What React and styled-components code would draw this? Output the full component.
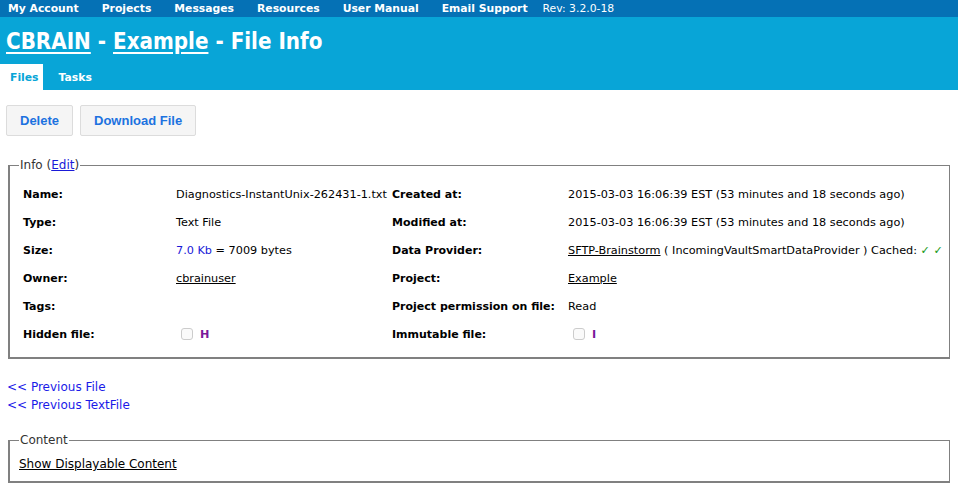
import styled, { createGlobalStyle } from 'styled-components';

const GlobalStyle = createGlobalStyle`
  html, body {
    margin: 0;
    padding: 0;
    background: #ffffff;
    font-family: "DejaVu Sans", Verdana, sans-serif;
    color: #000000;
  }
`;

/* --- Top menu bar --- */
const MenuBar = styled.div`
  display: flex;
  align-items: center;
  height: 17px;
  padding-left: 8px;
  background: #0571b5;
`;

const MenuItem = styled.a`
  margin-right: ${(props) => props.gap || '23px'};
  color: #ffffff;
  font-size: 10.8px;
  font-weight: bold;
  text-decoration: none;
  white-space: nowrap;
`;

const Revision = styled.span`
  color: #ffffff;
  font-size: 10.8px;
  white-space: nowrap;
`;

/* --- Page header --- */
const Header = styled.div`
  display: flex;
  flex-direction: column;
  height: 73px;
  background: #08a5d7;
`;

const Title = styled.h1`
  margin: 10px 0 0 6px;
  color: #ffffff;
  font-family: "DejaVu Sans Condensed", "DejaVu Sans", sans-serif;
  font-stretch: condensed;
  font-size: 22.2px;
  font-weight: bold;
  line-height: 28px;
  white-space: nowrap;

  a {
    color: #ffffff;
    text-decoration: underline;
    text-underline-offset: 3px;
  }
`;

const Tabs = styled.div`
  display: flex;
  gap: 16px;
  margin-top: auto;
  height: 26px;
`;

const Tab = styled.a`
  display: flex;
  align-items: center;
  padding: 0 ${(props) => (props.active ? '4px 0 10px' : '0 0 0')};
  background: ${(props) => (props.active ? '#ffffff' : 'transparent')};
  color: ${(props) => (props.active ? '#08a5d7' : '#ffffff')};
  font-size: 10.8px;
  font-weight: bold;
  text-decoration: none;
`;

/* --- Buttons --- */
const ButtonRow = styled.div`
  display: flex;
  gap: 7px;
  padding: 15px 0 0 6px;
`;

const Button = styled.button`
  height: 31px;
  padding: 0 13px;
  background: #f5f5f5;
  border: 1px solid #dcdcdc;
  border-radius: 2px;
  color: #1c72e0;
  font-family: "Liberation Sans", Arial, sans-serif;
  font-size: 13px;
  font-weight: bold;
`;

/* --- Fieldsets --- */
const Box = styled.fieldset`
  margin: ${(props) => props.margin || '0'};
  padding: ${(props) => props.pad || '0'};
  border: 1px solid #808080;
  border-bottom-width: 2px;
  border-left-width: 2px;
`;

const Legend = styled.legend`
  margin-left: ${(props) => props.indent || '0'};
  padding: 0 1px;
  color: #333333;
  font-size: 12px;

  a {
    color: #1a1ad8;
  }
`;

const InfoGrid = styled.div`
  display: grid;
  grid-template-columns: 153px 216px 176px auto;
  grid-auto-rows: 28px;
  align-items: center;
  padding-left: 13px;
  font-size: 11px;
`;

const Label = styled.div`
  font-weight: bold;
  white-space: nowrap;
`;

const Value = styled.div`
  font-size: 11.25px;
  white-space: nowrap;

  a {
    color: #000000;
  }
`;

const SizeLink = styled.span`
  color: #1a1ad8;
`;

const Check = styled.span`
  color: #1a9a1a;
`;

const FakeBox = styled.span`
  display: inline-block;
  width: 10px;
  height: 10px;
  margin: 0 7px 0 5px;
  vertical-align: -2px;
  border: 1px solid #cccccc;
  border-radius: 3px;
  background: #fafafa;
`;

const Flag = styled.span`
  color: #7a1a9a;
  font-weight: bold;
`;

/* --- Navigation links --- */
const NavLinks = styled.div`
  display: flex;
  flex-direction: column;
  margin: 19px 0 0 7px;
  font-size: 12px;
  line-height: 18px;

  a {
    color: #1a1ae8;
    text-decoration: none;
  }
`;

const ContentLink = styled.a`
  display: block;
  color: #000000;
  font-size: 12px;
  text-decoration: underline;
`;

const dateRows = [
  ['Name:', 'Diagnostics-InstantUnix-262431-1.txt', 'Created at:'],
  ['Type:', 'Text File', 'Modified at:'],
];

const stamp = '2015-03-03 16:06:39 EST (53 minutes and 18 seconds ago)';

export default function App() {
  return (
    <>
      <GlobalStyle />
      <MenuBar>
        <MenuItem>My Account</MenuItem>
        <MenuItem>Projects</MenuItem>
        <MenuItem>Messages</MenuItem>
        <MenuItem>Resources</MenuItem>
        <MenuItem>User Manual</MenuItem>
        <MenuItem gap="15px">Email Support</MenuItem>
        <Revision>Rev: 3.2.0-18</Revision>
      </MenuBar>
      <Header>
        <Title>
          <a href="#">CBRAIN</a> - <a href="#">Example</a> - File Info
        </Title>
        <Tabs>
          <Tab active>Files</Tab>
          <Tab>Tasks</Tab>
        </Tabs>
      </Header>

      <ButtonRow>
        <Button>Delete</Button>
        <Button>Download File</Button>
      </ButtonRow>

      <Box margin="22px 8px 0 8px" pad="8px 0 9px 0">
        <Legend indent="9px">
          Info (<a href="#">Edit</a>)
        </Legend>
        <InfoGrid>
          {dateRows.map((r) => [
            <Label key={r[0]}>{r[0]}</Label>,
            <Value key={r[1]}>{r[1]}</Value>,
            <Label key={r[2]}>{r[2]}</Label>,
            <Value key={r[2] + 'v'}>{stamp}</Value>,
          ])}
          <Label>Size:</Label>
          <Value>
            <SizeLink>7.0 Kb</SizeLink> = 7009 bytes
          </Value>
          <Label>Data Provider:</Label>
          <Value>
            <a href="#">SFTP-Brainstorm</a> ( IncomingVaultSmartDataProvider ) Cached: <Check>✓ ✓</Check>
          </Value>
          <Label>Owner:</Label>
          <Value>
            <a href="#">cbrainuser</a>
          </Value>
          <Label>Project:</Label>
          <Value>
            <a href="#">Example</a>
          </Value>
          <Label>Tags:</Label>
          <Value />
          <Label>Project permission on file:</Label>
          <Value>Read</Value>
          <Label>Hidden file:</Label>
          <Value>
            <FakeBox />
            <Flag>H</Flag>
          </Value>
          <Label>Immutable file:</Label>
          <Value>
            <FakeBox />
            <Flag>I</Flag>
          </Value>
        </InfoGrid>
      </Box>

      <NavLinks>
        <a href="#">&lt;&lt; Previous File</a>
        <a href="#">&lt;&lt; Previous TextFile</a>
      </NavLinks>

      <Box margin="19px 8px 0 8px" pad="10px 9px 10px 9px">
        <Legend>Content</Legend>
        <ContentLink href="#">Show Displayable Content</ContentLink>
      </Box>
    </>
  );
}
